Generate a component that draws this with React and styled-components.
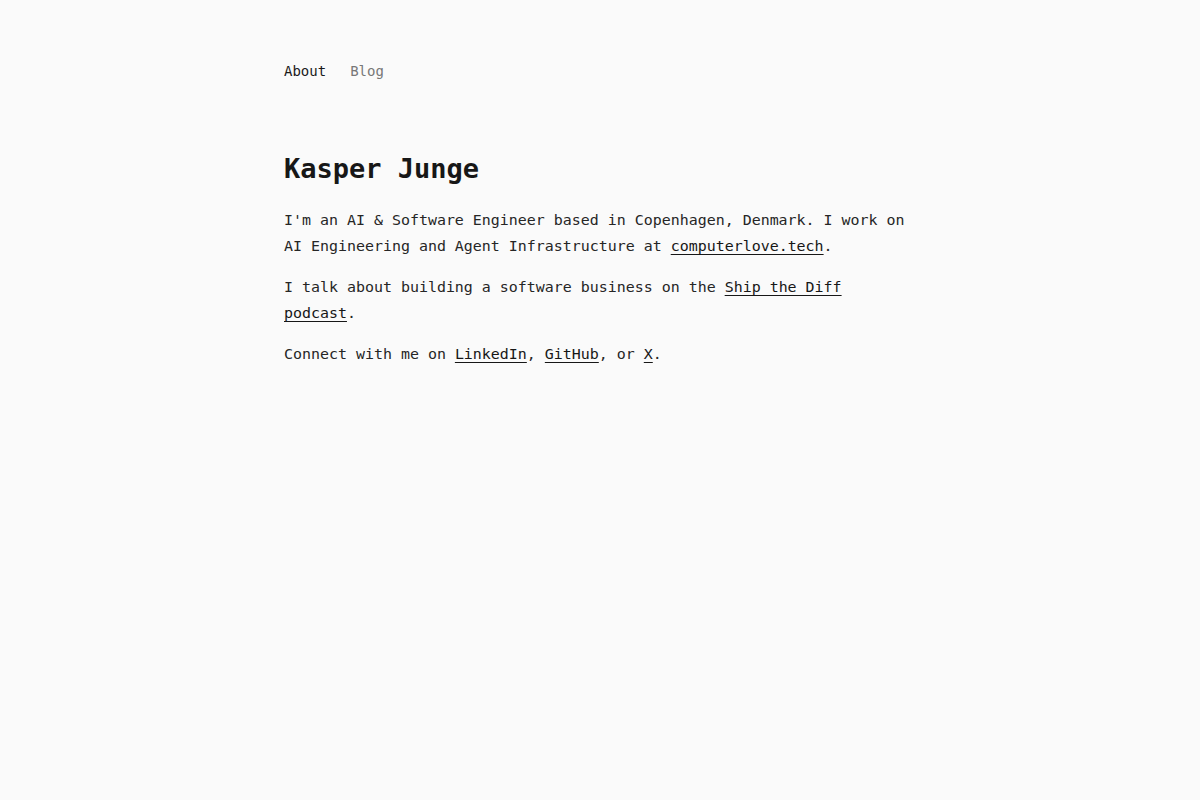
import React from 'react';
import styled, { createGlobalStyle } from 'styled-components';

const GlobalStyle = createGlobalStyle`
  html, body {
    margin: 0;
    padding: 0;
    background: #fafafa;
  }
  body {
    font-family: "DejaVu Sans Mono", "Liberation Mono", monospace;
    color: #1f1f1f;
    -webkit-font-smoothing: antialiased;
  }
`;

const Page = styled.div`
  max-width: 672px;
  margin: 0 auto;
  padding: 0 20px;
  box-sizing: border-box;
  min-height: 800px;
`;

const Nav = styled.nav`
  display: flex;
  gap: 24px;
  padding-top: 61px;
`;

const NavLink = styled.a`
  font-size: 14px;
  line-height: 20px;
  text-decoration: none;
  color: ${(p) => (p.$active ? '#1a1a1a' : '#777777')};
`;

const Main = styled.main`
  padding-top: 70px;
`;

const Name = styled.h1`
  font-size: 27px;
  font-weight: 700;
  line-height: 36px;
  margin: 0 0 20px;
  color: #171717;
  letter-spacing: 0;
`;

const Text = styled.p`
  font-size: 14.95px;
  line-height: 26px;
  margin: 0 0 15px;
  color: #262626;
`;

const Link = styled.a`
  color: #171717;
  text-decoration: underline;
  text-underline-offset: 3px;
  text-decoration-thickness: 1px;
`;

export default function App() {
  return (
    <>
      <GlobalStyle />
      <Page>
        <Nav>
          <NavLink href="#" $active>About</NavLink>
          <NavLink href="#">Blog</NavLink>
        </Nav>
        <Main>
          <Name>Kasper Junge</Name>
          <Text>
            I'm an AI &amp; Software Engineer based in Copenhagen, Denmark. I work on AI
            Engineering and Agent Infrastructure at <Link href="#">computerlove.tech</Link>.
          </Text>
          <Text>
            I talk about building a software business on the <Link href="#">Ship the Diff podcast</Link>.
          </Text>
          <Text>
            Connect with me on <Link href="#">LinkedIn</Link>, <Link href="#">GitHub</Link>, or{' '}
            <Link href="#">X</Link>.
          </Text>
        </Main>
      </Page>
    </>
  );
}
